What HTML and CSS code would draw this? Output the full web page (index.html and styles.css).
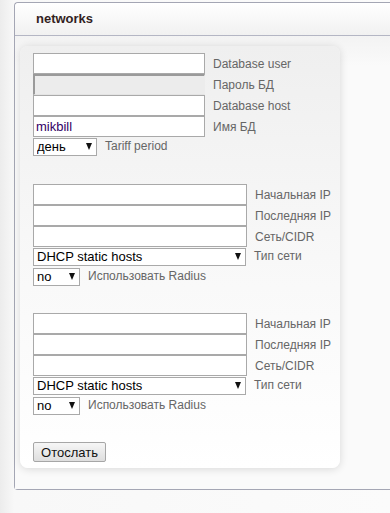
FILE: index.html
```html
<!DOCTYPE html>
<html>
<head>
<meta charset="utf-8">
<link rel="stylesheet" href="styles.css">
</head>
<body>
<div class="panel">
  <div class="panel-head">networks</div>
  <div class="panel-body">
    <div class="box">
      <div class="group first">
        <div class="row"><input class="txt w1" type="text"><span class="lbl">Database user</span></div>
        <div class="row"><input class="txt w1 pass" type="password"><span class="lbl">Пароль БД</span></div>
        <div class="row"><input class="txt w1" type="text"><span class="lbl">Database host</span></div>
        <div class="row"><input class="txt w1 val" type="text" value="mikbill"><span class="lbl">Имя БД</span></div>
        <div class="row srow"><div class="sel s-day"><select><option>день</option></select></div><span class="lbl">Tariff period</span></div>
      </div>
      <div class="group">
        <div class="row"><input class="txt w2" type="text"><span class="lbl">Начальная IP</span></div>
        <div class="row"><input class="txt w2" type="text"><span class="lbl">Последняя IP</span></div>
        <div class="row"><input class="txt w2" type="text"><span class="lbl">Сеть/CIDR</span></div>
        <div class="row srow"><div class="sel s-type"><select><option>DHCP static hosts</option></select></div><span class="lbl">Тип сети</span></div>
        <div class="row srow s2"><div class="sel s-no"><select><option>no</option></select></div><span class="lbl">Использовать Radius</span></div>
      </div>
      <div class="group">
        <div class="row"><input class="txt w2" type="text"><span class="lbl">Начальная IP</span></div>
        <div class="row"><input class="txt w2" type="text"><span class="lbl">Последняя IP</span></div>
        <div class="row"><input class="txt w2" type="text"><span class="lbl">Сеть/CIDR</span></div>
        <div class="row srow"><div class="sel s-type"><select><option>DHCP static hosts</option></select></div><span class="lbl">Тип сети</span></div>
        <div class="row srow s2"><div class="sel s-no"><select><option>no</option></select></div><span class="lbl">Использовать Radius</span></div>
      </div>
      <div class="group last">
        <button class="btn" type="button">Отослать</button>
      </div>
    </div>
  </div>
</div>
</body>
</html>
```
FILE: styles.css
```css
html, body {
  margin: 0;
  padding: 0;
  background: #f4f4f4;
  font-family: "Liberation Sans", Arial, sans-serif;
}
body {
  width: 390px;
  height: 513px;
  overflow: hidden;
  background: linear-gradient(to right, #ececec 0px, #f8f8f8 14px, #fbfbfb 100%);
}
.panel {
  margin: 2px 0 0 14px;
  width: 375px;
  height: 486px;
  border: 1px solid #a4a6b4;
  border-right: 0;
  border-radius: 4px 0 0 4px;
  background: #f9f9f9;
  box-sizing: content-box;
}
.panel-head {
  height: 32px;
  border-bottom: 1px solid #b4b6c4;
  background: linear-gradient(to bottom, #ffffff, #f1f1f1);
  border-radius: 4px 0 0 0;
  padding-left: 21px;
  font-size: 13px;
  font-weight: bold;
  color: #331f1f;
  line-height: 31px;
}
.panel-body {
  padding: 10px 0 0 5px;
  background: linear-gradient(to bottom, #f3f3f3, #fafafa 30px, #fafafa);
  height: 443px;
}
.box {
  width: 320px;
  box-sizing: border-box;
  border-radius: 8px;
  background: linear-gradient(to bottom, #efefef 0%, #f8f8f8 50%, #ffffff 100%);
  box-shadow: 0 1px 8px rgba(0,0,0,0.14);
  padding: 7px 0 6px 13px;
  display: flex;
  flex-direction: column;
  gap: 28px;
}
.group {
  display: flex;
  flex-direction: column;
}
.group.first { margin-bottom: 1px; }
.row {
  display: flex;
  align-items: center;
  gap: 8px;
  height: 21px;
}
.srow { height: 18px; }
.s2 { margin-top: 2px; }
.txt {
  box-sizing: border-box;
  height: 21px;
  margin: 0;
  border: 1px solid #a9a9a9;
  background: #fff;
  padding: 0 2px;
  font-family: "Liberation Sans", Arial, sans-serif;
  font-size: 13px;
  color: #330066;
  outline: none;
}
.w1 { width: 172px; }
.w2 { width: 214px; }
.pass {
  background: #ececec;
  border-top: 2px solid #9a9a9a;
  border-left: 2px solid #9a9a9a;
  border-right: 1px solid #ececec;
  border-bottom: 1px solid #e4e4e4;
}
.lbl {
  font-size: 12px;
  color: #666;
  white-space: nowrap;
}
.sel {
  position: relative;
  height: 18px;
}
.sel select {
  appearance: none;
  -webkit-appearance: none;
  box-sizing: border-box;
  height: 18px;
  width: 100%;
  margin: 0;
  border: 1px solid #a9a9a9;
  border-radius: 0;
  background: #fff;
  font-family: "Liberation Sans", Arial, sans-serif;
  font-size: 13px;
  color: #000;
  padding: 0 0 0 3px;
  outline: none;
}
.sel::after {
  content: "";
  position: absolute;
  right: 5px;
  top: 6px;
  border-left: 3.5px solid transparent;
  border-right: 3.5px solid transparent;
  border-top: 7px solid #111;
  pointer-events: none;
}
.s-day { width: 64px; }
.s-type { width: 213px; }
.s-no { width: 47px; }
.btn {
  align-self: flex-start;
  box-sizing: border-box;
  width: 73px;
  height: 20px;
  margin: 0;
  padding: 0;
  border: 1px solid #a6a6a6;
  border-radius: 2px;
  background: linear-gradient(to bottom, #f6f6f6, #dedede);
  font-family: "Liberation Sans", Arial, sans-serif;
  font-size: 13px;
  color: #111;
}
```
